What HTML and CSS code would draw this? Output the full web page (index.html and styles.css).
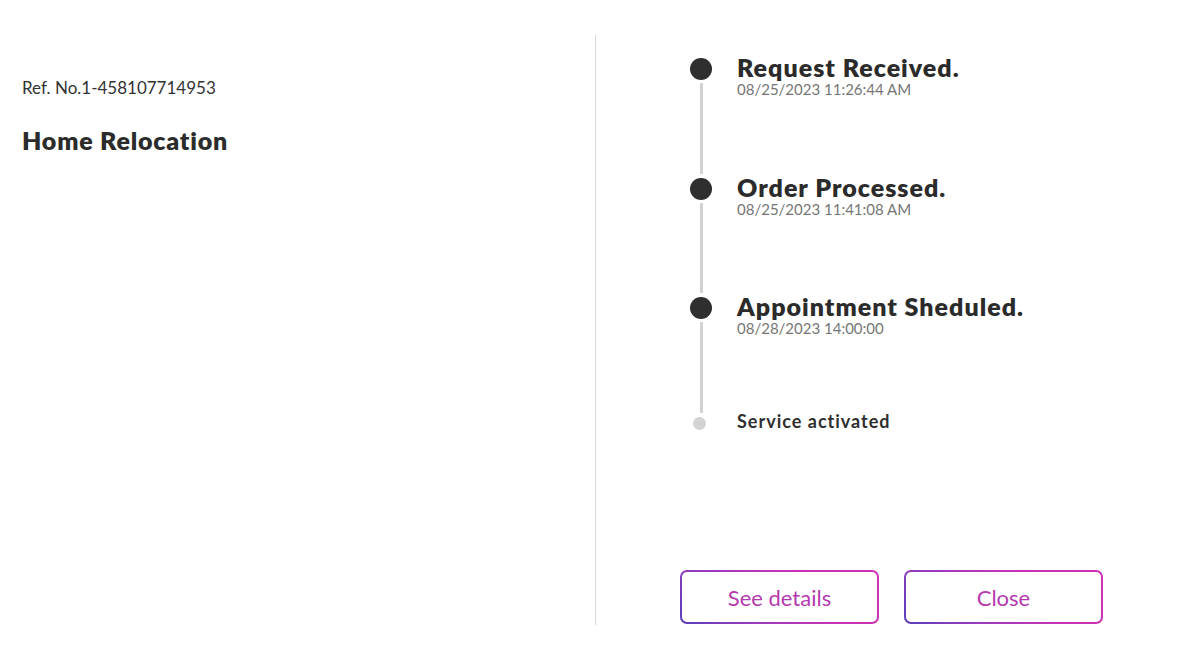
FILE: index.html
```html
<!DOCTYPE html>
<html lang="en">
<head>
<meta charset="utf-8">
<title>Order tracking</title>
<link rel="stylesheet" href="styles.css">
</head>
<body>
<div class="page">
  <section class="left">
    <p class="ref">Ref. No.1-458107714953</p>
    <h1 class="service">Home Relocation</h1>
  </section>
  <section class="right">
    <ol class="timeline">
      <li class="step">
        <div class="marker"><span class="dot"></span><span class="line"></span></div>
        <div class="content">
          <div class="title">Request Received.</div>
          <div class="date">08/25/2023 11:26:44 AM</div>
        </div>
      </li>
      <li class="step">
        <div class="marker"><span class="dot"></span><span class="line"></span></div>
        <div class="content">
          <div class="title">Order Processed.</div>
          <div class="date">08/25/2023 11:41:08 AM</div>
        </div>
      </li>
      <li class="step">
        <div class="marker"><span class="dot"></span><span class="line"></span></div>
        <div class="content">
          <div class="title">Appointment Sheduled.</div>
          <div class="date">08/28/2023 14:00:00</div>
        </div>
      </li>
      <li class="step step-pending">
        <div class="marker"><span class="dot dot-small"></span></div>
        <div class="content">
          <div class="title-small">Service activated</div>
        </div>
      </li>
    </ol>
    <div class="actions">
      <button class="btn" type="button">See details</button>
      <button class="btn" type="button">Close</button>
    </div>
  </section>
</div>
</body>
</html>
```
FILE: styles.css
```css
* { box-sizing: border-box; }
html, body {
  margin: 0;
  padding: 0;
  background: #ffffff;
  font-family: "Lato", "Open Sans", sans-serif;
  color: #2d2d2d;
}
.page {
  display: flex;
  width: 1200px;
  height: 650px;
  padding-top: 35px;
}
.left {
  width: 596px;
  height: 590px;
  border-right: 1px solid #d9d9d9;
  padding: 42px 0 0 22px;
}
.ref {
  margin: 0;
  font-size: 17px;
  line-height: 22px;
  color: #333333;
}
.service {
  margin: 26px 0 0;
  font-size: 25px;
  line-height: 30px;
  font-weight: 800;
  letter-spacing: 0.8px;
  color: #2b2b2b;
}
.right {
  flex: 1;
  height: 590px;
  display: flex;
  flex-direction: column;
  padding-left: 84px;
}
.timeline {
  list-style: none;
  margin: 23px 0 0;
  padding: 0 0 0 10px;
}
.step {
  display: flex;
  height: 119.5px;
}
.step-pending { height: auto; }
.marker {
  width: 22px;
  display: flex;
  flex-direction: column;
  align-items: center;
}
.dot {
  width: 22px;
  height: 22px;
  border-radius: 50%;
  background: #2f2f2f;
  flex: none;
}
.dot-small {
  width: 13px;
  height: 13px;
  background: #d3d3d3;
  margin-right: 3px;
}
.line {
  flex: 1;
  width: 3px;
  background: #d3d3d3;
  margin: 3px 0 4px;
}
.content {
  padding-left: 25px;
  margin-top: -3px;
}
.title {
  font-size: 25px;
  line-height: 24px;
  font-weight: 800;
  letter-spacing: 1px;
  color: #2b2b2b;
}
.date {
  margin-top: 2px;
  font-size: 15px;
  line-height: 16px;
  color: #767676;
}
.step-pending .content {
  margin-top: 0;
}
.title-small {
  margin-top: -6px;
  font-size: 18px;
  line-height: 20px;
  font-weight: 700;
  letter-spacing: 1px;
  color: #2f2f2f;
}
.actions {
  margin-top: auto;
  margin-bottom: 1px;
  display: flex;
  gap: 25px;
}
.btn {
  width: 199px;
  height: 54px;
  border: 2px solid transparent;
  border-radius: 7px;
  background:
    linear-gradient(#ffffff, #ffffff) padding-box,
    linear-gradient(45deg, #5b3fb8 0%, #9a3bbd 30%, #c533b8 60%, #d131b0 100%) border-box;
  font-family: "Lato", "Open Sans", sans-serif;
  font-size: 22px;
  color: #b43aae;
  cursor: pointer;
}
```
